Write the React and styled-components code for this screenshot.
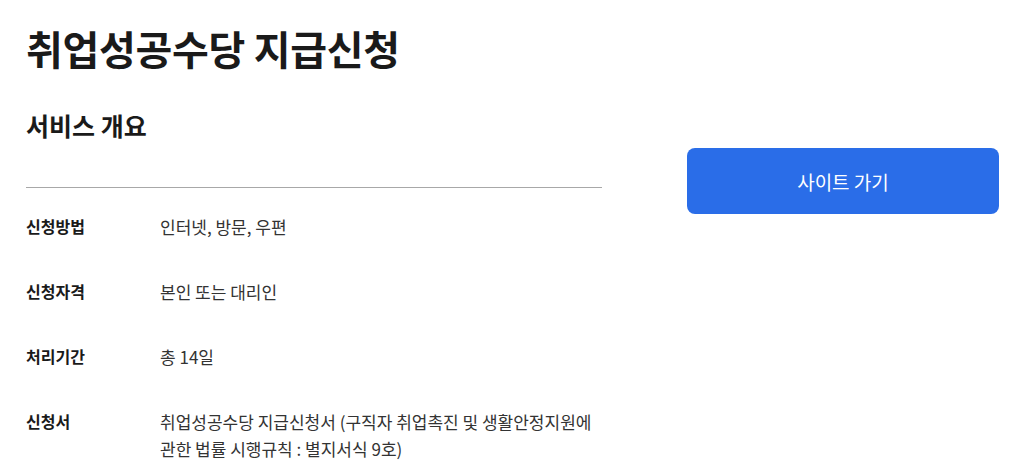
import React from 'react';
import styled, { createGlobalStyle } from 'styled-components';

const GlobalStyle = createGlobalStyle`
  html, body {
    margin: 0;
    padding: 0;
    background: #ffffff;
  }

  body {
    font-family: 'Noto Sans CJK KR', 'Noto Sans', sans-serif;
    color: #1a1a1a;
  }
`;

const Page = styled.div`
  width: 1024px;
  height: 467px;
  overflow: hidden;
  padding: 24px 25px 0 26px;
  box-sizing: border-box;
`;

const Title = styled.h1`
  margin: 0;
  font-size: 40px;
  line-height: 48px;
  font-weight: 700;
  color: #1a1a1a;
  letter-spacing: -0.3px;
`;

const Body = styled.div`
  display: grid;
  grid-template-columns: 576px 312px;
  column-gap: 85px;
  margin-top: 37px;
`;

const Overview = styled.section`
  display: flex;
  flex-direction: column;
`;

const SectionTitle = styled.h2`
  margin: 0;
  font-size: 25px;
  line-height: 32px;
  font-weight: 700;
  color: #1a1a1a;
`;

const Divider = styled.hr`
  margin: 46px 0 0;
  border: none;
  border-top: 1px solid #a8a8a8;
`;

const InfoList = styled.dl`
  margin: 25px 0 0;
  display: flex;
  flex-direction: column;
  gap: 38px;
`;

const InfoRow = styled.div`
  display: grid;
  grid-template-columns: 134px 1fr;
  line-height: 27px;
`;

const Label = styled.dt`
  font-size: 16px;
  font-weight: 700;
  color: #1a1a1a;
`;

const Value = styled.dd`
  margin: 0;
  font-size: 17px;
  font-weight: 400;
  color: #333333;
`;

const Aside = styled.aside`
  padding-top: 39px;
`;

const SiteButton = styled.button`
  width: 312px;
  height: 66px;
  border: none;
  border-radius: 8px;
  background: #2a6de8;
  color: #ffffff;
  font-family: 'Noto Sans CJK KR', 'Noto Sans', sans-serif;
  font-size: 19px;
  font-weight: 400;
  cursor: pointer;
`;

const rows = [
  { label: '신청방법', value: '인터넷, 방문, 우편' },
  { label: '신청자격', value: '본인 또는 대리인' },
  { label: '처리기간', value: '총 14일' },
  {
    label: '신청서',
    value: '취업성공수당 지급신청서 (구직자 취업촉진 및 생활안정지원에 관한 법률 시행규칙 : 별지서식 9호)',
  },
];

const App = () => (
  <>
    <GlobalStyle />
    <Page>
      <Title>취업성공수당 지급신청</Title>
      <Body>
        <Overview>
          <SectionTitle>서비스 개요</SectionTitle>
          <Divider />
          <InfoList>
            {rows.map((row) => (
              <InfoRow key={row.label}>
                <Label>{row.label}</Label>
                <Value>{row.value}</Value>
              </InfoRow>
            ))}
          </InfoList>
        </Overview>
        <Aside>
          <SiteButton type="button">사이트 가기</SiteButton>
        </Aside>
      </Body>
    </Page>
  </>
);

export default App;
